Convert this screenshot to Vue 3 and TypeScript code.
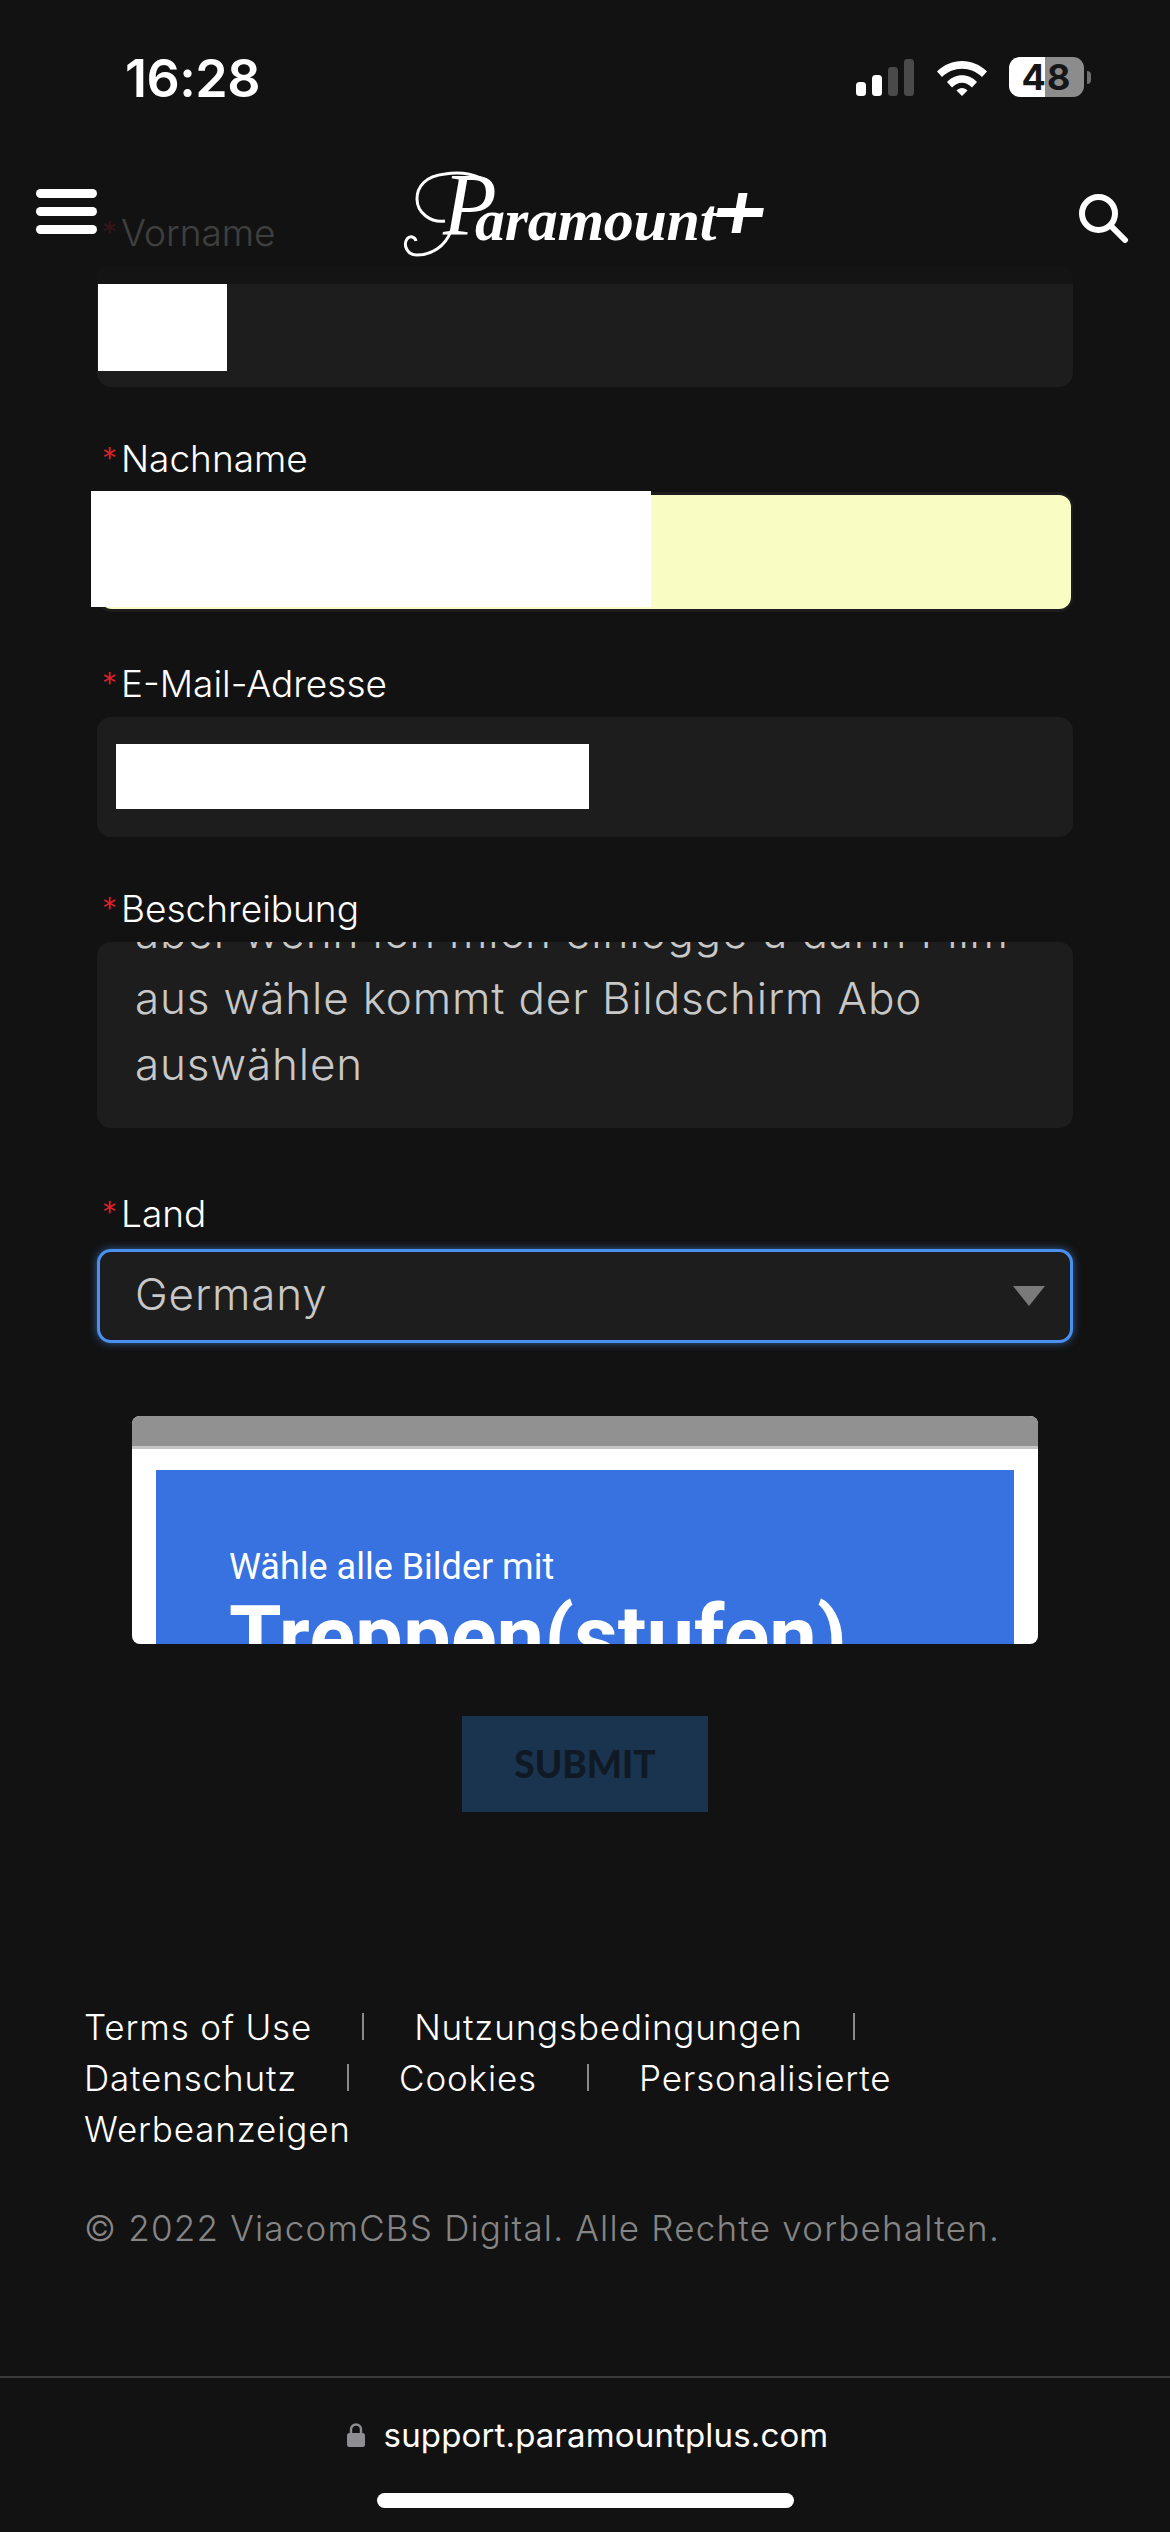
<script setup lang="ts">
const footerRows: string[][] = [
  ['Terms of Use', 'Nutzungsbedingungen'],
  ['Datenschutz', 'Cookies', 'Personalisierte'],
  ['Werbeanzeigen'],
]
</script>

<template>
  <div class="page">
    <div class="overlay">
      <div class="status">
        <span class="time">16:28</span>
        <div class="status-icons">
          <div class="signal">
            <i class="bar b1"></i><i class="bar b2"></i><i class="bar b3 off"></i><i class="bar b4 off"></i>
          </div>
          <svg class="wifi" width="50" height="37" viewBox="0 0 50 37">
            <path d="M0 12.500C14-1.500 36-1.500 50 12.500L45 18C34 7 16 7 5 18Z" fill="#fff"/>
            <path d="M10 23C18 14 32 14 40 23L35 28.500C29 22 21 22 15 28.500Z" fill="#fff"/>
            <path d="M19.500 31.500C22.500 28 27.500 28 30.500 31.500L25 37Z" fill="#fff"/>
          </svg>
          <div class="battery">
            <div class="cell">
              <span class="level">48</span>
            </div>
            <i class="nub"></i>
          </div>
        </div>
      </div>
      <div class="navbar">
        <div class="burger"><i></i><i></i><i></i></div>
        <div class="logo">
          <svg class="flourish" width="100" height="84" viewBox="0 0 100 84">
            <path d="M76 5C60-2 46 0 40 1C20 3 12 14 12 26C12 40 26 50 40 48" fill="none" stroke="#fff" stroke-width="3"/>
            <path d="M46 58C40 74 26 82 12 82C2 82-2 72 2 66C5 62 10 64 11 68" fill="none" stroke="#fff" stroke-width="3"/>
          </svg>
          <span class="logo-p">P</span>
          <span class="logo-word">aramount</span>
          <i class="logo-plus"></i>
        </div>
        <svg class="search" width="50" height="49" viewBox="0 0 50 49">
          <circle cx="19.500" cy="19.500" r="16.500" fill="none" stroke="#fff" stroke-width="6"/>
          <path d="M32 32L46 46" stroke="#fff" stroke-width="6" stroke-linecap="round" fill="none"/>
        </svg>
      </div>
    </div>

    <form class="form">
      <div class="field">
        <label class="label"><b>*</b>Vorname</label>
        <div class="input first"><i class="mask mask-first"></i></div>
      </div>
      <div class="field">
        <label class="label"><b>*</b>Nachname</label>
        <div class="input"><div class="autofill"></div><i class="mask mask-last"></i></div>
      </div>
      <div class="field">
        <label class="label"><b>*</b>E-Mail-Adresse</label>
        <div class="input"><i class="mask mask-mail"></i></div>
      </div>
      <div class="field field-text">
        <label class="label"><b>*</b>Beschreibung</label>
        <div class="textarea">
          <div class="textarea-inner">
            <p>aber wenn ich mich einlogge u dann Film</p>
            <p>aus wähle kommt der Bildschirm Abo</p>
            <p>auswählen</p>
          </div>
        </div>
      </div>
      <div class="field">
        <label class="label label-land"><b>*</b>Land</label>
        <div class="select"><span>Germany</span><i class="arrow"></i></div>
      </div>
      <div class="captcha">
        <div class="captcha-top"></div>
        <div class="captcha-blue">
          <div class="captcha-small">Wähle alle Bilder mit</div>
          <div class="captcha-big">Treppen(stufen)</div>
        </div>
      </div>
      <button type="button" class="submit">SUBMIT</button>
    </form>

    <footer class="footer">
      <div v-for="(row, r) in footerRows" :key="r" class="foot-row">
        <template v-for="(item, i) in row" :key="item">
          <a>{{ item }}</a>
          <i v-if="r < 2 && (i < row.length - 1 || r === 0)" class="sep"></i>
        </template>
      </div>
      <p class="copy">© 2022 ViacomCBS Digital. Alle Rechte vorbehalten.</p>
    </footer>

    <div class="urlbar">
      <div class="url">
        <svg width="18" height="24" viewBox="0 0 18 24">
          <path d="M4 11V6.500a5 5 0 0 1 10 0V11" fill="none" stroke="#8e8e93" stroke-width="2.400"/>
          <rect x="0" y="10" width="18" height="14" rx="2.500" fill="#8e8e93"/>
        </svg>
        <span>support.paramountplus.com</span>
      </div>
      <div class="home"></div>
    </div>
  </div>
</template>

<style>
html, body { margin: 0; background: #121212; }
</style>

<style scoped>
.page {
  position: relative;
  width: 1170px;
  height: 2532px;
  overflow: hidden;
  background: #121212;
  color: #fff;
  font-family: Inter, "Open Sans", sans-serif;
  font-weight: 300;
  display: flex;
  flex-direction: column;
}
.overlay {
  position: absolute;
  z-index: 3;
  left: 0;
  top: 0;
  width: 100%;
  height: 284px;
  background: rgba(18, 18, 18, 0.81);
}
.status {
  height: 156px;
  display: flex;
  justify-content: space-between;
  align-items: flex-start;
  padding: 0 79px 0 125px;
  box-sizing: border-box;
}
.time {
  margin-top: 51px;
  font: 600 52px/56px Inter, sans-serif;
  letter-spacing: -0.5px;
}
.status-icons { display: flex; margin-top: 57px; align-items: flex-start; }
.signal { display: flex; gap: 6px; align-items: flex-end; height: 39px; margin-right: 23px; }
.bar { width: 10px; background: #fff; border-radius: 3.500px; display: block; }
.b1 { height: 14px; } .b2 { height: 21px; } .b3 { height: 29px; } .b4 { height: 37px; }
.off { background: #4a4a4a; }
.wifi { margin: 2px 22px 0 0; }
.battery { display: flex; align-items: center; height: 40px; }
.cell {
  width: 75px;
  height: 40px;
  border-radius: 11px;
  background: linear-gradient(90deg, #fff 0 36px, #8c8c8c 36px);
  display: flex;
  align-items: center;
  justify-content: center;
}
.level { font: 700 36px/40px Inter, sans-serif; color: #161616; letter-spacing: 1px; }
.nub { width: 4px; height: 13px; margin-left: 3px; background: #6e6e6e; border-radius: 0 7px 7px 0; }
.navbar {
  height: 100px;
  position: relative;
  display: flex;
  align-items: flex-start;
  justify-content: space-between;
  padding: 33px 41px 0 36px;
  box-sizing: border-box;
}
.burger { display: flex; flex-direction: column; gap: 9px; }
.burger i { display: block; width: 61px; height: 9px; border-radius: 4.500px; background: #fff; }
.logo {
  position: absolute;
  left: 405px;
  top: 17px;
  width: 360px;
  height: 84px;
  font-family: "Liberation Serif", serif;
  font-style: italic;
}
.flourish { position: absolute; left: 0; top: 0; overflow: visible; }
.logo-p {
  position: absolute;
  left: 38px;
  top: -12px;
  font-size: 88px;
  line-height: 88px;
  font-weight: 400;
}
.logo-word {
  position: absolute;
  left: 70px;
  top: 14px;
  font-size: 60px;
  line-height: 66px;
  font-weight: 700;
  letter-spacing: -0.3px;
  white-space: nowrap;
}
.logo-plus {
  position: absolute;
  left: 312px;
  top: 20px;
  width: 46px;
  height: 40px;
  background:
    linear-gradient(#fff, #fff) 0 15px / 46px 9px no-repeat,
    linear-gradient(#fff, #fff) 18px 0 / 9px 40px no-repeat;
  transform: skewX(-10deg);
}
.search { margin-top: 5px; }

.form {
  padding: 220px 97px 0;
  display: flex;
  flex-direction: column;
}
.field { display: flex; flex-direction: column; margin-bottom: 59px; }
.field-text { margin-bottom: 72px; }
.label {
  position: relative;
  height: 46px;
  padding-left: 24px;
  font-size: 37px;
  line-height: 26px;
  font-weight: 300;
}
.label-land { height: 49px; line-height: 28px; }
.label b {
  position: absolute;
  left: 5px;
  top: 0;
  font-size: 30px;
  line-height: 24px;
  color: #e3202a;
  font-weight: 300;
}
.input {
  position: relative;
  height: 120px;
  border-radius: 14px;
  background: #1d1d1d;
  box-sizing: border-box;
}
.first { height: 121px; }
.autofill {
  position: absolute;
  inset: 3px 2px 3px 3px;
  border-radius: 12px;
  background: #fafdc3;
}
.mask { position: absolute; display: block; background: #fff; }
.mask-first { left: 1px; top: 18px; width: 129px; height: 87px; }
.mask-last { left: -6px; top: -1px; width: 560px; height: 116px; }
.mask-mail { left: 19px; top: 27px; width: 473px; height: 65px; }
.textarea {
  height: 186px;
  border-radius: 14px;
  background: #1d1d1d;
  padding: 0 38px;
  box-sizing: border-box;
  overflow: hidden;
  font-size: 44px;
  line-height: 66px;
  letter-spacing: 0.85px;
  color: #c8c8c8;
}
.textarea-inner { margin-top: -43px; }
.textarea p { margin: 0; white-space: nowrap; }
.select {
  height: 94px;
  border: 3px solid #4a90f0;
  border-radius: 14px;
  box-shadow: 0 0 8px rgba(74, 144, 240, 0.6);
  background: #1d1d1d;
  box-sizing: border-box;
  display: flex;
  justify-content: space-between;
  align-items: center;
  padding: 0 25px 4px 35px;
  font-size: 44px;
  letter-spacing: 0.85px;
  color: #c8c8c8;
}
.arrow {
  width: 0;
  height: 0;
  margin-top: 4px;
  border-left: 16px solid transparent;
  border-right: 16px solid transparent;
  border-top: 20px solid #7a7a7a;
}
.captcha {
  align-self: center;
  width: 906px;
  height: 228px;
  margin-top: 14px;
  border-radius: 8px;
  overflow: hidden;
  background: #fff;
}
.captcha-top { height: 30px; background: #919191; border-bottom: 3px solid #c4c4c4; }
.captcha-blue {
  margin: 21px 24px 0;
  height: 400px;
  background: #3871e0;
  padding: 70px 73px 0;
  box-sizing: border-box;
  font-family: Roboto, sans-serif;
  font-weight: 400;
}
.captcha-small { font-size: 36px; line-height: 55px; }
.captcha-big { font-size: 85px; line-height: 84px; font-weight: 700; white-space: nowrap; }
.submit {
  align-self: center;
  width: 246px;
  height: 96px;
  margin-top: 72px;
  border: 0;
  background: #1a334f;
  color: #101a24;
  font: 900 37px/96px Lato, sans-serif;
  padding: 0;
}
.footer { padding: 189px 84px 0; }
.foot-row { display: flex; align-items: center; height: 51px; font-size: 35px; letter-spacing: 0.85px; }
.sep { width: 2px; height: 27px; background: #8a8a8a; margin: 0 50px; }
.copy { margin: 49px 0 0; font-size: 35px; line-height: 50px; letter-spacing: 1.2px; color: #858585; }
.urlbar {
  position: absolute;
  left: 0;
  right: 0;
  bottom: 0;
  height: 156px;
  border-top: 2px solid #3a3a3a;
  box-sizing: border-box;
  display: flex;
  flex-direction: column;
  align-items: center;
}
.url { display: flex; align-items: center; gap: 19px; margin-top: 37px; padding-left: 5px; font: 400 33px/40px Inter, sans-serif; letter-spacing: 0.15px; }
.home { width: 417px; height: 15px; border-radius: 8px; background: #fff; margin-top: 38px; }
</style>
